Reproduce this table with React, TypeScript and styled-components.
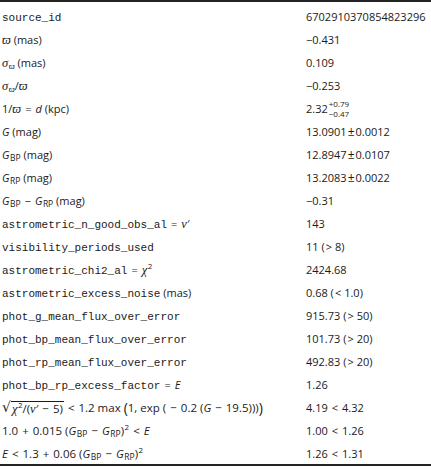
import { createGlobalStyle } from 'styled-components'
import styled from 'styled-components'
import type { ReactNode } from 'react'

const GlobalStyle = createGlobalStyle`
	html, body {
		margin: 0;
		padding: 0;
		background: #ffffff;
	}
	body {
		font-family: 'Open Sans', 'Noto Sans', sans-serif;
		font-size: 11px;
		color: #1a1a1a;
	}
`

const Table = styled.table`
	width: 431px;
	border-collapse: collapse;
	border-top: 2px solid #222;
	border-bottom: 2px solid #222;
`
const Body = styled.tbody`
	&::before {
		content: '';
		display: table-row;
		height: 4px;
	}
`
const Row = styled.tr`
	height: 23px;
`
const LabelCell = styled.td`
	padding: 0 0 0 2px;
	white-space: nowrap;
	vertical-align: middle;
	width: 304px;
`
const ValueCell = styled.td`
	padding: 0;
	white-space: nowrap;
	vertical-align: middle;
`
const Code = styled.span`
	font-family: 'Liberation Mono', 'DejaVu Sans Mono', monospace;
	font-size: 11px;
`
const Greek = styled.span`
	font-family: 'Liberation Serif', 'DejaVu Serif', serif;
	font-style: italic;
	font-size: 12.5px;
`
const Var = styled.span`
	font-style: italic;
`
const Sub = styled.sub<{ $serif?: boolean }>`
	font-size: 8.5px;
	vertical-align: -2px;
	line-height: 0;
	margin-left: 0.5px;
	font-family: ${(p) =>
		p.$serif ? "'Liberation Serif', serif" : "'Open Sans', sans-serif"};
	font-style: ${(p) => (p.$serif ? 'italic' : 'normal')};
`
const Sup = styled.sup`
	font-size: 8px;
	vertical-align: 5px;
	line-height: 0;
	margin-left: 0.5px;
`
const Stack = styled.span`
	display: inline-flex;
	flex-direction: column;
	vertical-align: 6px;
	font-size: 8px;
	line-height: 10px;
	margin-left: 1px;
`
const Op = styled.span`
	margin: 0 4px;
`
const LeadOp = styled.span`
	margin: 0 3px 0 1px;
`
const PlusMinus = styled.span`
	margin: 0 1px;
	font-size: 12px;
`
const Big = styled.span`
	font-size: 14px;
	line-height: 0;
	vertical-align: -1px;
`
const Radical = styled.span`
	display: inline-flex;
	align-items: stretch;
`
const RadicalSign = styled.span`
	font-family: 'DejaVu Sans', sans-serif;
	font-size: 14px;
	line-height: 14px;
`
const Radicand = styled.span`
	border-top: 1px solid #1a1a1a;
	padding: 0 1px;
	line-height: 13px;
	margin-top: 1px;
`
const MathText = styled.span`
	font-size: 11.5px;
`

const varpi = <Greek>ϖ</Greek>
const sigmaPi = (
	<>
		<Greek>σ</Greek>
		<Sub $serif>ϖ</Sub>
	</>
)
const gBand = (band: string) => (
	<>
		<Var>G</Var>
		<Sub>{band}</Sub>
	</>
)
const colour = (
	<>
		({gBand('BP')}
		<Op>−</Op>
		{gBand('RP')})
	</>
)
const mag = (value: string, err: string) => (
	<>
		{value}
		<PlusMinus>±</PlusMinus>
		{err}
	</>
)
const limit = (value: string, rel: string, bound: string) => (
	<>
		{value} (<LeadOp>{rel}</LeadOp>
		{bound})
	</>
)

const rows: [ReactNode, ReactNode][] = [
	[<Code>source_id</Code>, '6702910370854823296'],
	[<>{varpi} (mas)</>, '−0.431'],
	[<>{sigmaPi} (mas)</>, '0.109'],
	[<>{sigmaPi}/{varpi}</>, '−0.253'],
	[
		<>
			1/{varpi}
			<Op>=</Op>
			<Var>d</Var> (kpc)
		</>,
		<>
			2.32
			<Stack>
				<span>+0.79</span>
				<span>−0.47</span>
			</Stack>
		</>,
	],
	[<><Var>G</Var> (mag)</>, mag('13.0901', '0.0012')],
	[<>{gBand('BP')} (mag)</>, mag('12.8947', '0.0107')],
	[<>{gBand('RP')} (mag)</>, mag('13.2083', '0.0022')],
	[
		<>
			{gBand('BP')}
			<Op>−</Op>
			{gBand('RP')} (mag)
		</>,
		'−0.31',
	],
	[
		<>
			<Code>astrometric_n_good_obs_al</Code>
			<Op>=</Op>
			<Greek>ν</Greek>′
		</>,
		'143',
	],
	[<Code>visibility_periods_used</Code>, limit('11', '>', '8')],
	[
		<>
			<Code>astrometric_chi2_al</Code>
			<Op>=</Op>
			<Greek>χ</Greek>
			<Sup>2</Sup>
		</>,
		'2424.68',
	],
	[
		<><Code>astrometric_excess_noise</Code> (mas)</>,
		limit('0.68', '<', '1.0'),
	],
	[<Code>phot_g_mean_flux_over_error</Code>, limit('915.73', '>', '50')],
	[<Code>phot_bp_mean_flux_over_error</Code>, limit('101.73', '>', '20')],
	[<Code>phot_rp_mean_flux_over_error</Code>, limit('492.83', '>', '20')],
	[
		<>
			<Code>phot_bp_rp_excess_factor</Code>
			<Op>=</Op>
			<Var>E</Var>
		</>,
		'1.26',
	],
	[
		<MathText>
			<Radical>
				<RadicalSign>√</RadicalSign>
				<Radicand>
					<Greek>χ</Greek>
					<Sup>2</Sup>/(<Greek>ν</Greek>′<Op>−</Op>5)
				</Radicand>
			</Radical>
			<Op>&lt;</Op>1.2 max <Big>(</Big>1, exp (<Op>−</Op>0.2 (<Var>G</Var>
			<Op>−</Op>19.5)))<Big>)</Big>
		</MathText>,
		<>4.19<Op>&lt;</Op>4.32</>,
	],
	[
		<MathText>
			1.0<Op>+</Op>0.015 {colour}
			<Sup>2</Sup>
			<Op>&lt;</Op>
			<Var>E</Var>
		</MathText>,
		<>1.00<Op>&lt;</Op>1.26</>,
	],
	[
		<MathText>
			<Var>E</Var>
			<Op>&lt;</Op>1.3<Op>+</Op>0.06 {colour}
			<Sup>2</Sup>
		</MathText>,
		<>1.26<Op>&lt;</Op>1.31</>,
	],
]

function App() {
	return (
		<>
			<GlobalStyle />
			<Table>
				<Body>
					{rows.map(([label, value], i) => (
						<Row key={i}>
							<LabelCell>{label}</LabelCell>
							<ValueCell>{value}</ValueCell>
						</Row>
					))}
				</Body>
			</Table>
		</>
	)
}

export default App
